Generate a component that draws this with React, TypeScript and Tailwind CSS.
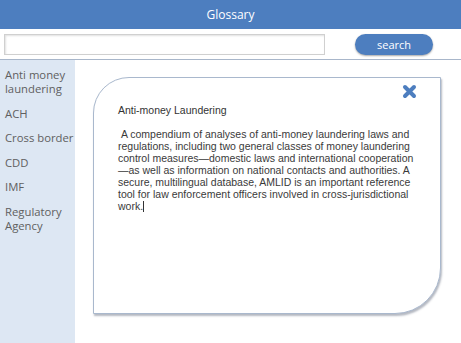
import React from "react";

export default function App() {
  const items = [
    "Anti money laundering",
    "ACH",
    "Cross border",
    "CDD",
    "IMF",
    "Regulatory Agency",
  ];
  return (
    <div className="w-[461px] h-[343px] bg-white flex flex-col overflow-hidden" style={{ fontFamily: "'Open Sans', sans-serif" }}>
      <div className="h-[29px] bg-[#4d7ebf] flex items-center justify-center text-white text-[12px] shrink-0">
        Glossary
      </div>
      <div className="h-[31px] shrink-0 flex items-center border-b border-[#a8b6ca] pl-[4px]">
        <div className="w-[321px] h-[21px] border border-[#d0d0d0] bg-white shadow-[inset_1px_1px_2px_rgba(0,0,0,0.12)]" />
        <button className="ml-[30px] w-[78px] h-[21px] rounded-full bg-[#4d7ebf] text-white text-[11px] leading-none flex items-center justify-center shadow-[0_1px_2px_rgba(0,0,0,0.35)]">
          search
        </button>
      </div>
      <div className="flex flex-1 min-h-0">
        <div className="w-[75px] bg-[#dde7f3] pt-[8px] pl-[5px] pr-0 flex flex-col gap-[10.6px] text-[11.3px] leading-[14px] text-[#606060] shrink-0">
          {items.map((t) => (
            <div key={t}>{t}</div>
          ))}
        </div>
        <div className="flex-1 pl-[18px] pt-[17px]">
          <div className="relative w-[348px] h-[237px] bg-white border border-[#a9b8cd] rounded-tl-[36px] rounded-br-[46px] shadow-[1px_2px_2px_rgba(90,100,120,0.45)] pl-[24px] pt-[26px]" style={{ fontFamily: "'Liberation Sans', Arial, sans-serif" }}>
            <svg className="absolute left-[308px] top-[6px]" width="15" height="15" viewBox="0 0 15 15">
              <path d="M3 3 L12 12 M12 3 L3 12" stroke="#4d7ebf" strokeWidth="4" strokeLinecap="round" />
            </svg>
            <div className="text-[10.5px] leading-[12px] text-[#333]">Anti-money Laundering</div>
            <p className="mt-[12px] w-[298px] text-[10.5px] leading-[12px] text-[#3a3a3a]">
              {"\u00a0A compendium of analyses of anti-money laundering laws and regulations, including two general classes of money laundering control measures\u2014domestic laws and international cooperation \u2014as well as information on national contacts and authorities. A secure, multilingual database, AMLID is an important reference tool for law enforcement officers involved in cross-jurisdictional work."}
              <span className="inline-block w-px h-[11px] bg-[#333] align-[-2px]" />
            </p>
          </div>
        </div>
      </div>
    </div>
  );
}
